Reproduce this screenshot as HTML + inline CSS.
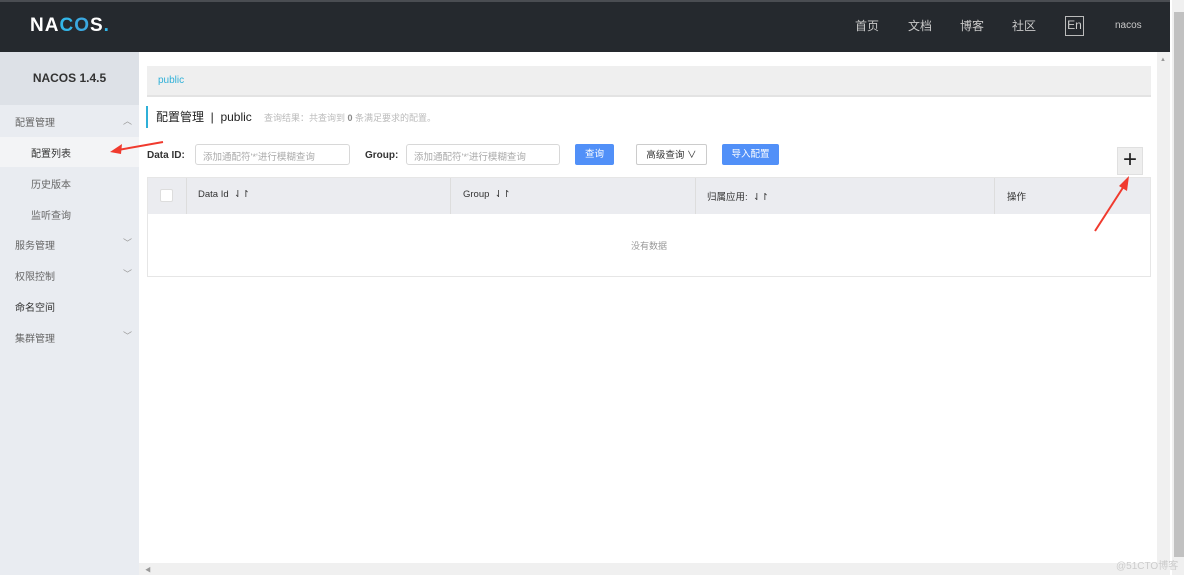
<!DOCTYPE html>
<html><head><meta charset="utf-8"><style>
*{box-sizing:border-box;margin:0;padding:0}
body{width:1184px;height:575px;overflow:hidden;font-family:"Liberation Sans","Noto Sans CJK SC",sans-serif;background:#fff;position:relative;font-size:10px;color:#333}
.hd{position:absolute;left:0;top:0;width:1170px;height:52px;background:#25292e;border-top:2px solid #4a4d52}
.logo{position:absolute;left:30px;top:13px;color:#fff;font-size:19px;font-weight:bold;letter-spacing:1px}
.nav{position:absolute;top:15px;color:#c8c8c8;font-size:12px}
.side{position:absolute;left:0;top:52px;width:139px;height:523px;background:#e9ecf1}
.side .t{height:53px;background:#dde1e7;text-align:center;line-height:53px;font-weight:bold;font-size:12px;color:#333}
.it{position:absolute;left:15px;font-size:10px;color:#666}
.chev{position:absolute;left:123px;font-size:9px;color:#999}
.sb{position:absolute;left:1157px;top:52px;width:13px;height:523px;background:#f0f0f0}
.sb2{position:absolute;left:1172px;top:0;width:12px;height:575px;background:#f0f0f0}
.hs{position:absolute;left:139px;top:563px;width:1018px;height:12px;background:#f0f0f0}
.bc{position:absolute;left:147px;top:66px;width:1004px;height:31px;background:#efefef;border-bottom:2px solid #e3e3e3;color:#2fb0d8;font-size:10px;padding:9px 0 0 11px}
.inp{position:absolute;top:144px;height:21px;border:1px solid #d8d8d8;border-radius:3px;color:#aaa;font-size:9.5px;padding:4px 0 0 7px}
.lbl{position:absolute;top:150px;font-weight:bold;font-size:10px;color:#333}
.btn{position:absolute;top:144px;height:21px;border-radius:2px;font-size:9.5px;text-align:center;line-height:21px}
</style></head><body>
<div class="hd">
<div class="logo">NA<span style="color:#33b6e8">C</span><span style="color:#3ba8e0">O</span>S<span style="color:#33b6e8">.</span></div>
<div class="nav" style="left:855px">首页</div>
<div class="nav" style="left:908px">文档</div>
<div class="nav" style="left:960px">博客</div>
<div class="nav" style="left:1012px">社区</div>
<div style="position:absolute;left:1065px;top:14px;width:19px;height:20px;border:1px solid #bbb;color:#ccc;font-size:12px;text-align:center;line-height:17px">En</div>
<div class="nav" style="left:1115px;font-size:10px;top:18px">nacos</div>
</div>
<div class="side"><div class="t">NACOS 1.4.5</div>
<div style="position:absolute;left:0;top:85px;width:139px;height:30px;background:#f3f4f6"></div>
</div>
<div class="it" style="top:114px">配置管理</div><div class="chev" style="top:114px">︿</div>
<div class="it" style="top:145px;left:31px;color:#333">配置列表</div>
<div class="it" style="top:176px;left:31px">历史版本</div>
<div class="it" style="top:207px;left:31px">监听查询</div>
<div class="it" style="top:237px">服务管理</div><div class="chev" style="top:236px">﹀</div>
<div class="it" style="top:268px">权限控制</div><div class="chev" style="top:267px">﹀</div>
<div class="it" style="top:299px;color:#333">命名空间</div>
<div class="it" style="top:330px">集群管理</div><div class="chev" style="top:329px">﹀</div>
<div class="bc">public</div>
<div style="position:absolute;left:146px;top:106px;width:2px;height:22px;background:#2fb0d8"></div>
<div style="position:absolute;left:156px;top:108px;font-size:12px;color:#222">配置管理 &nbsp;|&nbsp; public</div>
<div style="position:absolute;left:264px;top:111px;font-size:9px;color:#bbb">查询结果：共查询到 <b style="color:#888">0</b> 条满足要求的配置。</div>
<div class="lbl" style="left:147px">Data ID:</div>
<div class="inp" style="left:195px;width:155px">添加通配符'*'进行模糊查询</div>
<div class="lbl" style="left:365px">Group:</div>
<div class="inp" style="left:406px;width:154px">添加通配符'*'进行模糊查询</div>
<div class="btn" style="left:575px;width:39px;background:#5190f8;color:#fff">查询</div>
<div class="btn" style="left:636px;width:71px;border:1px solid #ccc;color:#333">高级查询 ∨</div>
<div class="btn" style="left:722px;width:57px;background:#5190f8;color:#fff">导入配置</div>
<div style="position:absolute;left:1117px;top:147px;width:26px;height:28px;background:#eee;border:1px solid #e0e0e0;font-size:24px;line-height:24px;text-align:center;color:#222">+</div>
<div style="position:absolute;left:147px;top:177px;width:1004px;height:100px;border:1px solid #e6e6e6">
<div style="height:36px;background:#ebecf0;position:relative;font-size:9.5px;color:#333">
<div style="position:absolute;left:12px;top:11px;width:13px;height:13px;background:#fff;border:1px solid #ddd;border-radius:2px"></div>
<div style="position:absolute;left:38px;top:0;width:1px;height:36px;background:#ddd"></div>
<div style="position:absolute;left:50px;top:11px">Data Id &nbsp;⇃↾</div>
<div style="position:absolute;left:302px;top:0;width:1px;height:36px;background:#ddd"></div>
<div style="position:absolute;left:315px;top:11px">Group &nbsp;⇃↾</div>
<div style="position:absolute;left:547px;top:0;width:1px;height:36px;background:#ddd"></div>
<div style="position:absolute;left:559px;top:11px">归属应用: &nbsp;⇃↾</div>
<div style="position:absolute;left:846px;top:0;width:1px;height:36px;background:#ddd"></div>
<div style="position:absolute;left:859px;top:11px">操作</div>
</div>
<div style="text-align:center;color:#999;font-size:9px;margin-top:25px">没有数据</div>
</div>
<div class="sb"><div style="position:absolute;left:3px;top:5px;font-size:6px;color:#999">▲</div></div>
<div class="sb2"><div style="position:absolute;left:2px;top:12px;width:10px;height:545px;background:#c1c1c1"></div></div>
<div class="hs"><div style="position:absolute;left:6px;top:2px;font-size:6px;color:#999">◀</div></div>
<div style="position:absolute;left:1116px;top:557px;font-size:10px;color:#ccc">@51CTO博客</div>
<svg style="position:absolute;left:0;top:0" width="1184" height="575">
<path d="M163 142 L118 150" stroke="#f03a2e" stroke-width="2"/><path d="M110 152 L122 144 L121 154 Z" fill="#f03a2e"/>
<path d="M1095 231 L1124 186" stroke="#f03a2e" stroke-width="2"/><path d="M1129 176 L1127 191 L1119 186 Z" fill="#f03a2e"/>
</svg>
</body></html>
